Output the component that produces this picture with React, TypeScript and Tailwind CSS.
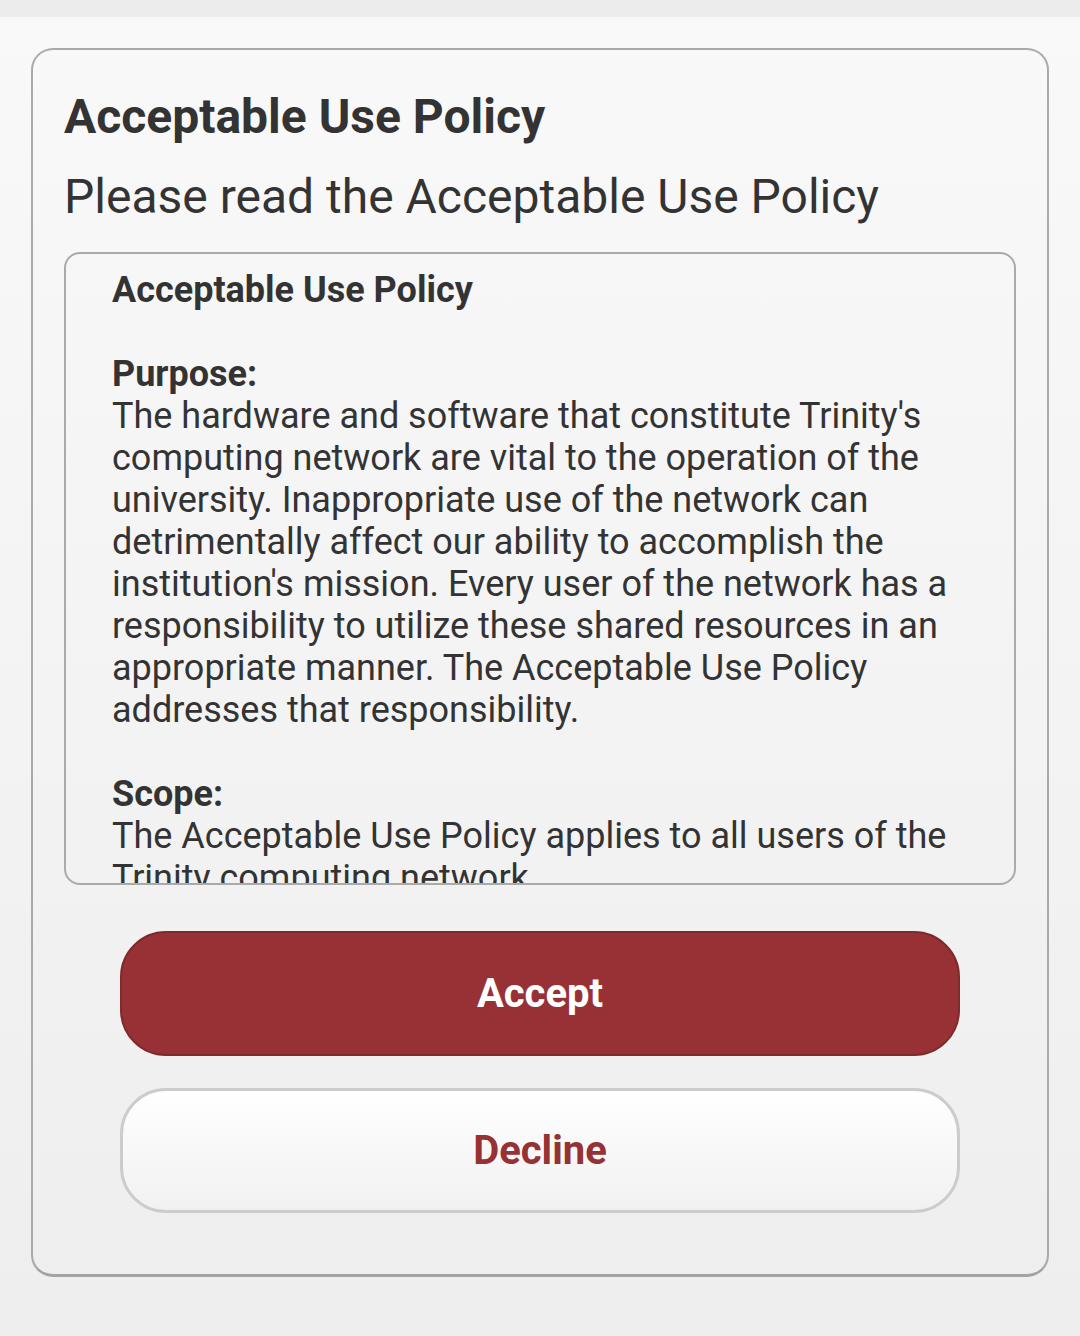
export default function App() {
  return (
    <div
      className="min-h-[1336px] w-full bg-gradient-to-b from-[#f9f9f9] to-[#eeeeee] text-[#333333]"
      style={{ fontFamily: "Roboto, 'Noto Sans', sans-serif" }}
    >
      {/* top strip */}
      <div className="h-[17px] w-full bg-[#ececec]" />

      <div className="px-[31px] pt-[31px]">
        <div className="rounded-[22px] border-2 border-[#aaaaaa] border-b-[3px] border-b-[#a3a3a3] px-[31px] pt-[39px] pb-[61px]">
          <h1 className="text-[48px] font-bold leading-[56px]">
            Acceptable Use Policy
          </h1>
          <p className="mt-[24px] text-[48px] leading-[56px]">
            Please read the Acceptable Use Policy
          </p>

          {/* policy text */}
          <div className="mt-[27px] h-[633px] overflow-hidden rounded-[16px] border-2 border-[#aaaaaa] pl-[46px] pr-[30px] pt-[15px] text-[36px] leading-[42px]">
            <p className="font-bold">Acceptable Use Policy</p>
            <br />
            <p className="font-bold">Purpose:</p>
            <p>
              The hardware and software that constitute Trinity's computing
              network are vital to the operation of the university.
              Inappropriate use of the network can detrimentally affect our
              ability to accomplish the institution's mission. Every user of
              the network has a responsibility to utilize these shared
              resources in an appropriate manner. The Acceptable Use Policy
              addresses that responsibility.
            </p>
            <br />
            <p className="font-bold">Scope:</p>
            <p>
              The Acceptable Use Policy applies to all users of the Trinity
              computing network.
            </p>
          </div>

          {/* actions */}
          <div className="mt-[46px] flex flex-col gap-[32px] px-[56px]">
            <button className="h-[125px] rounded-[46px] border-2 border-[#7f2a2d] bg-[#973135] text-[40px] font-bold text-white">
              Accept
            </button>
            <button className="h-[125px] rounded-[46px] border-[3px] border-[#cccccc] bg-gradient-to-b from-[#ffffff] to-[#f1f1f1] text-[40px] font-bold text-[#963134]">
              Decline
            </button>
          </div>
        </div>
      </div>
    </div>
  );
}
